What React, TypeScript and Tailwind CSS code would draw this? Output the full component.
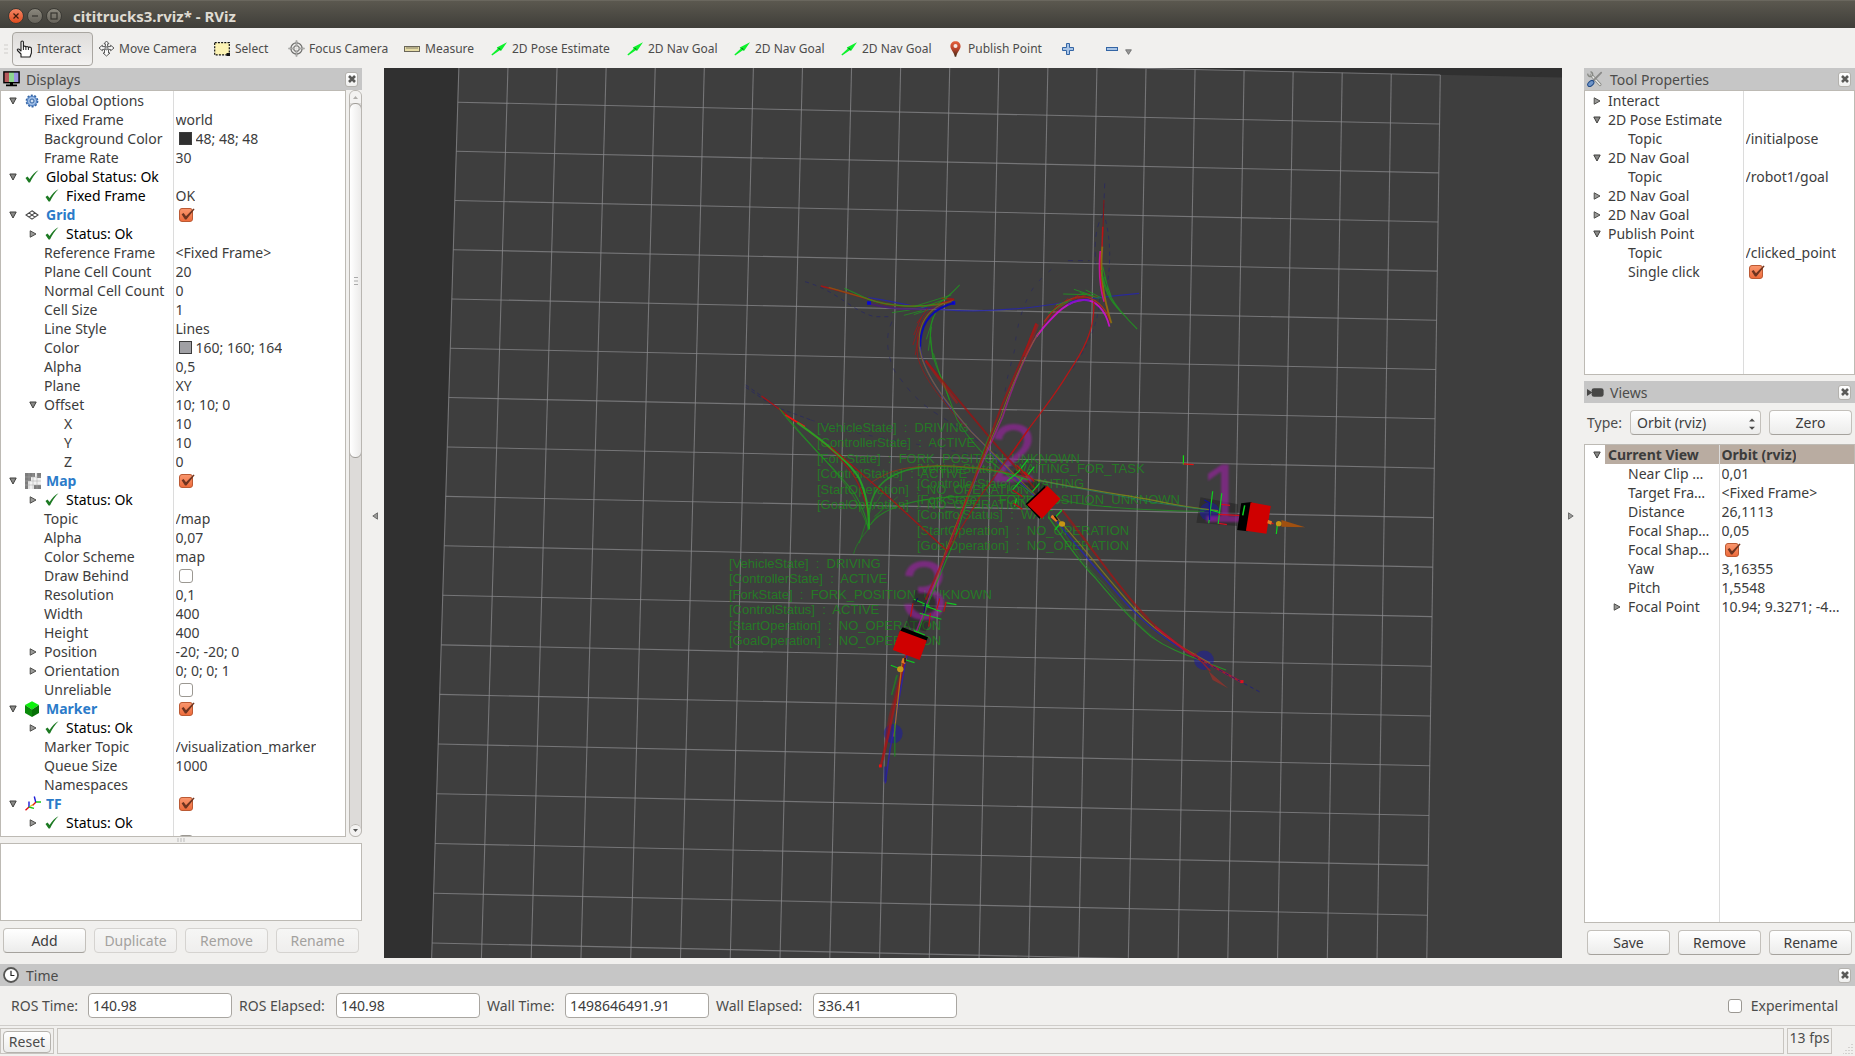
import React from "react";

/* ---------- small shared pieces ---------- */

const buttonFace =
  "h-[25px] rounded border border-[#c3c0bb] border-b-[#a5a29d] bg-linear-to-b from-white to-[#ececeb] text-center leading-[22px]";

function PushButton({ label, disabled = false }: { label: string; disabled?: boolean }) {
  return (
    <button
      type="button"
      disabled={disabled}
      className={
        disabled
          ? "h-[25px] min-w-0 flex-1 rounded border border-[#d5d3d0] bg-linear-to-b from-[#f6f6f5] to-[#efeeed] text-center leading-[22px] text-[#a3a19e]"
          : buttonFace + " min-w-0 flex-1"
      }
    >
      {label}
    </button>
  );
}

function CheckBox({ label, checked = false }: { label: string; checked?: boolean }) {
  return (
    <span className="relative block size-[14px]">
      <input
        type="checkbox"
        aria-label={label}
        defaultChecked={checked}
        className="peer block size-[14px] appearance-none rounded-[3px] border border-[#9b9892] bg-white checked:border-[#bb5a34] checked:bg-linear-to-b checked:from-[#f9956c] checked:to-[#ee6c3c]"
      />
      <svg
        viewBox="0 0 16 16"
        className="pointer-events-none absolute top-[-1px] left-0 hidden size-4 peer-checked:block"
      >
        <path d="M2.6 7.2 L4.6 6 L7 9.2 L14.6 1.6 L15.6 2.2 L7.4 12.6 L6 12.4 Z" fill="#6e3420" />
      </svg>
    </span>
  );
}

function Arrow({ open }: { open: boolean }) {
  return open ? (
    <svg viewBox="0 0 8 8" className="size-2">
      <path d="M0.8 1 H7.2 L4 7 Z" fill="#8a8a88" stroke="#3f3f3d" />
    </svg>
  ) : (
    <svg viewBox="0 0 8 8" className="size-2">
      <path d="M1.2 0.8 V7.2 L7 4 Z" fill="#9a9a98" stroke="#4d4d4b" />
    </svg>
  );
}

function CloseButton({ label }: { label: string }) {
  return (
    <button
      type="button"
      aria-label={label}
      className="flex h-[15px] w-[13px] items-center justify-center rounded-[3px] border border-[#b4b2ae] bg-linear-to-b from-white to-[#f0f0ef]"
    >
      <svg viewBox="0 0 8 8" className="size-2">
        <path d="M1 1 L7 7 M7 1 L1 7" stroke="#5a5a58" strokeWidth="2.6" />
      </svg>
    </button>
  );
}

function PanelTitle({ icon, title }: { icon: React.ReactNode; title: string }) {
  return (
    <div className="flex h-[22px] shrink-0 items-center bg-[#c6c6c6] pr-1 pl-[3px] text-[#4c4c4b]">
      <span className="flex w-[23px] shrink-0 items-center">{icon}</span>
      <h2 className="flex-1 pt-0.5 leading-5">{title}</h2>
      <CloseButton label={"Close " + title} />
    </div>
  );
}

/* ---------- icons ---------- */

const MonitorIcon = () => (
  <svg viewBox="0 0 17 16" className="h-4 w-[17px]">
    <rect x="1" y="1" width="5" height="10.5" fill="#b5595c" />
    <rect x="6" y="1" width="5" height="10.5" fill="#8fd691" />
    <rect x="11" y="1" width="5" height="10.5" fill="#9b94e0" />
    <rect x="0.9" y="0.9" width="15.2" height="10.8" fill="none" stroke="#000" strokeWidth="1.4" />
    <path d="M7 12h3v1.5h4v1.7H3v-1.7h4z" fill="#000" />
  </svg>
);

const GearIcon = () => (
  <svg viewBox="0 0 14 14" className="size-[14px]">
    <circle cx="7" cy="7" r="5.6" fill="#8fb3e0" stroke="#3465a4" strokeWidth="1.6" strokeDasharray="2 1.5" />
    <circle cx="7" cy="7" r="4.6" fill="#9dbce4" stroke="#4a7abf" strokeWidth="0.8" />
    <circle cx="7" cy="7" r="2" fill="#cfdff2" stroke="#3465a4" />
  </svg>
);

const TickIcon = () => (
  <svg viewBox="0 0 14 13" className="h-[13px] w-[14px]">
    <path d="M0.5 8 L2.5 6.6 L4.6 9 C7 5 10 2 13.4 0.3 C10 4 7 8 5 12.6 L3.6 12.6 Z" fill="#1d7a23" />
  </svg>
);

const GridIcon = () => (
  <svg viewBox="0 0 14 10" className="h-[10px] w-[14px]" fill="none" stroke="#484848" strokeWidth="1.1">
    <path d="M7 0.8 L13 5 L7 9.2 L1 5 Z M4 2.9 L10 7.1 M10 2.9 L4 7.1" />
  </svg>
);

const MapIcon = () => (
  <svg viewBox="0 0 16 16" className="size-4">
    <rect width="16" height="16" fill="#f2f2f2" />
    <path d="M0 0h10v4h-4v4h-3v8h-3z M12 0h4v5h-4z M9 12h7v4H9z" fill="#7d7d7d" />
    <path d="M4 0v16M8 0v16M12 0v16M0 4h16M0 8h16M0 12h16" stroke="#aaa" strokeWidth="0.5" />
  </svg>
);

const CubeIcon = () => (
  <svg viewBox="0 0 14 16" className="h-4 w-[14px]">
    <path d="M7 0.2 L14 4 L7 8.4 L0 4 Z" fill="#0cf20c" />
    <path d="M0 4 L7 8.4 V16 L0 12 Z" fill="#0a8a0a" />
    <path d="M14 4 L7 8.4 V16 L14 12 Z" fill="#067006" />
  </svg>
);

const AxesIcon = () => (
  <svg viewBox="0 0 16 15" className="h-[15px] w-4" fill="none" strokeWidth="1.4">
    <path d="M4 11 L0.5 14.3 M11 6 L7.5 9.5" stroke="#e01010" />
    <path d="M4 11 V5.5 M10.7 6 L9.3 0.5" stroke="#1c1cd8" />
    <path d="M4 11 L9 12.4 M11 6 H16" stroke="#18c818" />
    <path d="M5 10.5 L8 8.5" stroke="#e0c020" />
  </svg>
);

const ToolsIcon = () => (
  <svg viewBox="0 0 16 16" className="size-4">
    <path d="M4.2 4 L13 13.6" stroke="#888a85" strokeWidth="3" strokeLinecap="round" />
    <path d="M4.2 4 L13 13.6" stroke="#eeeeec" strokeWidth="1.4" strokeLinecap="round" />
    <path d="M0.9 2.6 a2.4 2.4 0 1 0 2.6 -1.8" fill="none" stroke="#888a85" strokeWidth="1.4" />
    <path d="M14.2 1.6 L6 10" stroke="#8a8a88" strokeWidth="1.8" strokeLinecap="round" />
    <ellipse cx="3.8" cy="12.5" rx="3.6" ry="2.3" transform="rotate(-42 3.8 12.5)" fill="#6f95c8" stroke="#204a87" />
  </svg>
);

const CameraIcon = () => (
  <svg viewBox="0 0 17 9" className="h-[9px] w-[17px]" fill="#474746">
    <path d="M0 1 L4 3.5 V5.5 L0 8 Z" />
    <rect x="4.6" y="0.2" width="12" height="8.6" rx="2.4" />
    <path d="M4 4.5h2" stroke="#474746" />
  </svg>
);

const ClockIcon = () => (
  <svg viewBox="0 0 16 16" className="size-4">
    <circle cx="8" cy="8" r="7" fill="#fff" stroke="#565654" strokeWidth="1.8" />
    <path d="M8 3.8 V8.5 H11.4" fill="none" stroke="#222" strokeWidth="1.2" />
  </svg>
);

const HandIcon = () => (
  <svg viewBox="0 0 18 18" className="size-[18px]">
    <path
      d="M5 17 L5 14 L1.5 10.5 C0.8 9.2 2 8.6 3 9.2 L5 11 V2 C5 0.6 7.4 0.6 7.4 2 V7 C7.4 5.8 9.9 5.8 9.9 7.2 C9.9 6.2 12.4 6.2 12.4 7.8 C12.6 6.8 15.4 6.8 15.4 8.6 V13 L14 17 Z"
      fill="#fff"
      stroke="#1e1e1e"
      strokeWidth="1.1"
      strokeLinejoin="round"
    />
    <path d="M7.4 7v3M9.9 7.4v2.6M12.4 8v2" stroke="#1e1e1e" />
  </svg>
);

const MoveIcon = () => (
  <svg viewBox="0 0 17 17" className="size-[17px]">
    <path
      d="M8.5 1 L11 3.8 H9.6 V6.6 H12.6 V5.2 L16 8 L12.6 10.8 V9.4 H10.5 V13 H12 L8.5 16 L5 13 H6.5 V9.4 H4.4 V10.8 L1 8 L4.4 5.2 V6.6 H7.4 V3.8 H6 Z"
      fill="#fafafa"
      stroke="#4a4a4a"
      strokeWidth="0.9"
    />
    <circle cx="8.5" cy="8.3" r="1.6" fill="#bbb" stroke="#555" strokeWidth="0.8" />
  </svg>
);

const SelectIcon = () => (
  <svg viewBox="0 0 16 14" className="h-[14px] w-4">
    <rect x="0.7" y="0.7" width="14.6" height="12.2" fill="#fcf3b4" stroke="#111" strokeWidth="1.2" strokeDasharray="2 1.2" />
    <path d="M12.5 11h3.5v3h-3.5z" fill="#111" />
  </svg>
);

const FocusIcon = () => (
  <svg viewBox="0 0 17 17" className="size-[17px]" fill="none" stroke="#7a7a78">
    <circle cx="8.5" cy="8.5" r="5.6" stroke="#6f6f6d" strokeWidth="1.2" />
    <circle cx="8.5" cy="8.5" r="2.8" strokeWidth="1.1" />
    <path d="M8.5 0.5v6M8.5 10.5v6M0.5 8.5h6M10.5 8.5h6" strokeWidth="1.6" />
    <path d="M8.5 1v15M1 8.5h15" stroke="#d9d9d7" strokeWidth="0.5" />
  </svg>
);

const RulerIcon = () => (
  <svg viewBox="0 0 16 6" className="h-[6px] w-4">
    <rect x="0.5" y="0.5" width="15" height="5" fill="#e6dca6" stroke="#6a6659" />
    <path d="M3 1v2M5 1v2M7 1v2M9 1v2M11 1v2M13 1v2" stroke="#6a6659" strokeWidth="0.8" />
  </svg>
);

const GoalIcon = () => (
  <svg viewBox="0 0 16 14" className="h-[14px] w-4">
    <path d="M0.4 12.4 L6.6 6.8 L5.8 5.6 L16 0.3 L10.2 8.8 L8.8 8.2 L1.2 13.4 Z" fill="#0df22c" />
    <path d="M6.6 5.8 L9.8 8.8 L9 6.2 Z" fill="#0b7a1c" />
  </svg>
);

const PinIcon = () => (
  <svg viewBox="0 0 11 16" className="h-4 w-[11px]">
    <defs>
      <linearGradient id="pin" x1="0" y1="0" x2="0" y2="1">
        <stop offset="0" stopColor="#e4603c" />
        <stop offset="0.5" stopColor="#b8432b" />
        <stop offset="1" stopColor="#3f2a14" />
      </linearGradient>
    </defs>
    <path d="M5.5 0.3 C8.6 0.3 10.6 2.4 10.6 5.3 C10.6 8.6 7 11 6.2 15.8 H4.8 C4 11 0.4 8.6 0.4 5.3 C0.4 2.4 2.4 0.3 5.5 0.3 Z" fill="url(#pin)" />
    <circle cx="5.5" cy="5" r="2" fill="#f4e9e4" />
  </svg>
);

/* ---------- window title and tool bar ---------- */

const roundButton =
  "flex size-4 items-center justify-center rounded-full border border-[#3b3a35] bg-linear-to-b from-[#8b887d] to-[#66635b]";

function TitleBar() {
  return (
    <header className="flex h-7 shrink-0 items-center border-t border-[#6a675e] bg-linear-to-b from-[#5b584f] to-[#3f3e39] pt-0.5 pl-2">
      <div className="flex w-[65px] gap-[3px]">
        <button type="button" aria-label="Close" className="flex size-4 items-center justify-center rounded-full border border-[#3b3a35] bg-linear-to-b from-[#f58462] to-[#df4b1b]">
          <svg viewBox="0 0 8 8" className="size-2">
            <path d="M1.5 1.5 L6.5 6.5 M6.5 1.5 L1.5 6.5" stroke="#3c1a0c" strokeWidth="1.2" />
          </svg>
        </button>
        <button type="button" aria-label="Minimize" className={roundButton}>
          <svg viewBox="0 0 8 8" className="size-2">
            <path d="M1 4h6" stroke="#36342f" strokeWidth="1.2" />
          </svg>
        </button>
        <button type="button" aria-label="Maximize" className={roundButton}>
          <svg viewBox="0 0 8 8" className="size-2">
            <rect x="1" y="1" width="6" height="6" fill="none" stroke="#36342f" strokeWidth="1.2" />
          </svg>
        </button>
      </div>
      <h1 className="text-[15px] leading-5 font-bold text-[#dfdbd2]">cititrucks3.rviz* - RViz</h1>
    </header>
  );
}

function Tool({ icon, label, width }: { icon: React.ReactNode; label: string; width: string }) {
  return (
    <button type="button" className={"flex h-[34px] shrink-0 items-center pl-[5px] " + width}>
      <span className="flex w-[21px] shrink-0 items-center">{icon}</span>
      <span className="whitespace-nowrap">{label}</span>
    </button>
  );
}

function ToolBar() {
  return (
    <nav aria-label="Tools" className="flex h-10 shrink-0 items-center pt-px pl-1 text-xs text-[#4c4c4b]">
      <svg viewBox="0 0 4 10" className="mr-1 h-[10px] w-1 shrink-0">
        <path d="M0 1h4M0 5h4M0 9h4" stroke="#cfcdca" />
      </svg>
      <button type="button" aria-pressed="true" className="flex h-[34px] w-[81px] shrink-0 items-center rounded border border-[#a9a6a1] bg-linear-to-b from-[#dedcda] to-[#f3f2f1] pl-[3px]">
        <span className="flex w-[21px] shrink-0 items-center">
          <HandIcon />
        </span>
        Interact
      </button>
      <Tool icon={<MoveIcon />} label="Move Camera" width="w-[116px]" />
      <Tool icon={<SelectIcon />} label="Select" width="w-[74px]" />
      <Tool icon={<FocusIcon />} label="Focus Camera" width="w-[116px]" />
      <Tool icon={<RulerIcon />} label="Measure" width="w-[87px]" />
      <Tool icon={<GoalIcon />} label="2D Pose Estimate" width="w-[136px]" />
      <Tool icon={<GoalIcon />} label="2D Nav Goal" width="w-[107px]" />
      <Tool icon={<GoalIcon />} label="2D Nav Goal" width="w-[107px]" />
      <Tool icon={<GoalIcon />} label="2D Nav Goal" width="w-[109px]" />
      <button type="button" className="flex h-[34px] w-[108px] shrink-0 items-center pl-[5px]">
        <span className="flex w-[18px] items-center">
          <PinIcon />
        </span>
        <span className="whitespace-nowrap">Publish Point</span>
      </button>
      <button type="button" aria-label="Add tool" className="flex h-[34px] w-11 shrink-0 items-center pl-[9px]">
        <svg viewBox="0 0 12 12" className="size-3">
          <path d="M4.5 0.5h3v4h4v3h-4v4h-3v-4h-4v-3h4z" fill="#a8c4e6" stroke="#3465a4" />
        </svg>
      </button>
      <button type="button" aria-label="Remove tool" className="flex h-[34px] w-10 shrink-0 items-center gap-[7px] pl-[9px]">
        <svg viewBox="0 0 12 4" className="h-1 w-3">
          <rect x="0.5" y="0.5" width="11" height="3" fill="#a8c4e6" stroke="#3465a4" />
        </svg>
        <svg viewBox="0 0 7 6" className="mt-1.5 h-1.5 w-[7px]">
          <path d="M0.6 0.8h5.8L3.5 5.4z" fill="#999" stroke="#666" strokeWidth="0.8" />
        </svg>
      </button>
    </nav>
  );
}

/* ---------- property trees ---------- */

type Row = {
  name: string;
  depth: number;
  value?: string;
  open?: boolean;
  icon?: React.ReactNode;
  check?: boolean;
  swatch?: string;
  tone?: "ok" | "display" | "selected";
};

const plainPad = ["pl-[23px]", "pl-[43px]", "pl-[63px]"];
const arrowSpace = ["w-[24px] pl-[8px]", "w-[44px] pl-[28px]", "w-[64px] pl-[48px]"];

const toneClass = { ok: "text-black", display: "font-bold text-[#2b7bc9]", selected: "font-bold" };

function NameCell({ row }: { row: Row }) {
  const tone = row.tone ? toneClass[row.tone] : "";
  const hasArrow = row.open !== undefined;
  if (!row.icon && !hasArrow) {
    return <div className={"truncate " + plainPad[row.depth] + " " + tone}>{row.name}</div>;
  }
  let nameOffset = "-ml-px";
  if (row.icon) nameOffset = "";
  if (row.tone === "selected") nameOffset = "-ml-1 bg-[#b9aca1] pl-[3px]";
  return (
    <div className={"flex h-[19px] items-center " + tone}>
      <span className={"flex shrink-0 items-center " + arrowSpace[row.depth]}>
        {hasArrow && <Arrow open={row.open === true} />}
      </span>
      {row.icon && <span className="flex w-[21px] shrink-0 items-center">{row.icon}</span>}
      <span className={"min-w-0 flex-1 truncate " + nameOffset}>{row.name}</span>
    </div>
  );
}

function Tree({ rows, label, nameWidth }: { rows: Row[]; label: string; nameWidth: string }) {
  return (
    <table aria-label={label} className="h-full w-full table-fixed border-collapse leading-[19px]">
      <colgroup>
        <col className={nameWidth} />
        <col />
      </colgroup>
      <tbody>
        {rows.map((row, i) => (
          <tr key={i} className="h-[19px]">
            <th scope="row" className="overflow-hidden border-r border-[#dcdcdc] p-0 text-left font-normal">
              <NameCell row={row} />
            </th>
            <td className={"overflow-hidden p-0 pl-0.5 " + (row.tone === "selected" ? "bg-[#b9aca1] font-bold" : "")}>
              <div className="flex h-[19px] items-center">
                {row.check !== undefined && (
                  <span className="pl-[3px]">
                    <CheckBox label={row.name} checked={row.check} />
                  </span>
                )}
                {row.swatch && <span className={"mr-1 ml-[3px] size-[13px] border border-[#3c3c3c] " + row.swatch} />}
                {row.value && <span className="truncate">{row.value}</span>}
              </div>
            </td>
          </tr>
        ))}
        <tr aria-hidden="true">
          <td className="border-r border-[#dcdcdc] p-0" />
          <td className="p-0" />
        </tr>
      </tbody>
    </table>
  );
}

const status: Row = { name: "Status: Ok", depth: 1, open: false, icon: <TickIcon />, tone: "ok" };

const displayRows: Row[] = [
  { name: "Global Options", depth: 0, open: true, icon: <GearIcon /> },
  { name: "Fixed Frame", depth: 1, value: "world" },
  { name: "Background Color", depth: 1, value: "48; 48; 48", swatch: "bg-[#303030]" },
  { name: "Frame Rate", depth: 1, value: "30" },
  { name: "Global Status: Ok", depth: 0, open: true, icon: <TickIcon />, tone: "ok" },
  { name: "Fixed Frame", depth: 1, icon: <TickIcon />, tone: "ok", value: "OK" },
  { name: "Grid", depth: 0, open: true, icon: <GridIcon />, tone: "display", check: true },
  status,
  { name: "Reference Frame", depth: 1, value: "<Fixed Frame>" },
  { name: "Plane Cell Count", depth: 1, value: "20" },
  { name: "Normal Cell Count", depth: 1, value: "0" },
  { name: "Cell Size", depth: 1, value: "1" },
  { name: "Line Style", depth: 1, value: "Lines" },
  { name: "Color", depth: 1, value: "160; 160; 164", swatch: "bg-[#a0a0a4]" },
  { name: "Alpha", depth: 1, value: "0,5" },
  { name: "Plane", depth: 1, value: "XY" },
  { name: "Offset", depth: 1, open: true, value: "10; 10; 0" },
  { name: "X", depth: 2, value: "10" },
  { name: "Y", depth: 2, value: "10" },
  { name: "Z", depth: 2, value: "0" },
  { name: "Map", depth: 0, open: true, icon: <MapIcon />, tone: "display", check: true },
  status,
  { name: "Topic", depth: 1, value: "/map" },
  { name: "Alpha", depth: 1, value: "0,07" },
  { name: "Color Scheme", depth: 1, value: "map" },
  { name: "Draw Behind", depth: 1, check: false },
  { name: "Resolution", depth: 1, value: "0,1" },
  { name: "Width", depth: 1, value: "400" },
  { name: "Height", depth: 1, value: "400" },
  { name: "Position", depth: 1, open: false, value: "-20; -20; 0" },
  { name: "Orientation", depth: 1, open: false, value: "0; 0; 0; 1" },
  { name: "Unreliable", depth: 1, check: false },
  { name: "Marker", depth: 0, open: true, icon: <CubeIcon />, tone: "display", check: true },
  status,
  { name: "Marker Topic", depth: 1, value: "/visualization_marker" },
  { name: "Queue Size", depth: 1, value: "1000" },
  { name: "Namespaces", depth: 1 },
  { name: "TF", depth: 0, open: true, icon: <AxesIcon />, tone: "display", check: true },
  status,
  { name: "Show Names", depth: 1, check: false },
];

const toolRows: Row[] = [
  { name: "Interact", depth: 0, open: false },
  { name: "2D Pose Estimate", depth: 0, open: true },
  { name: "Topic", depth: 1, value: "/initialpose" },
  { name: "2D Nav Goal", depth: 0, open: true },
  { name: "Topic", depth: 1, value: "/robot1/goal" },
  { name: "2D Nav Goal", depth: 0, open: false },
  { name: "2D Nav Goal", depth: 0, open: false },
  { name: "Publish Point", depth: 0, open: true },
  { name: "Topic", depth: 1, value: "/clicked_point" },
  { name: "Single click", depth: 1, check: true },
];

const viewRows: Row[] = [
  { name: "Current View", depth: 0, open: true, value: "Orbit (rviz)", tone: "selected" },
  { name: "Near Clip …", depth: 1, value: "0,01" },
  { name: "Target Fra…", depth: 1, value: "<Fixed Frame>" },
  { name: "Distance", depth: 1, value: "26,1113" },
  { name: "Focal Shap…", depth: 1, value: "0,05" },
  { name: "Focal Shap…", depth: 1, check: true },
  { name: "Yaw", depth: 1, value: "3,16355" },
  { name: "Pitch", depth: 1, value: "1,5548" },
  { name: "Focal Point", depth: 1, open: false, value: "10.94; 9.3271; -4…" },
];

/* ---------- side panels ---------- */

function ScrollBar() {
  return (
    <div aria-hidden="true" className="flex w-[13px] shrink-0 flex-col overflow-hidden rounded-md border border-[#b9b6b1] bg-[#dddbd9]">
      <div className="flex h-3 shrink-0 items-center justify-center bg-[#f3f2f1]">
        <svg viewBox="0 0 5 3" className="h-[3px] w-[5px]">
          <path d="M0 3 L2.5 0 L5 3z" fill="#b0aeab" />
        </svg>
      </div>
      <div className="-mx-px flex h-[355px] shrink-0 items-center justify-center rounded-md border border-[#a09d98] bg-linear-to-r from-white to-[#ebeae9]">
        <svg viewBox="0 0 4 8" className="h-2 w-1">
          <path d="M0 .5h4M0 4h4M0 7.5h4" stroke="#aaa" />
        </svg>
      </div>
      <div className="flex-1" />
      <div className="flex h-3 shrink-0 items-center justify-center rounded-md border-t border-[#b9b6b1] bg-[#f3f2f1]">
        <svg viewBox="0 0 5 3" className="h-[3px] w-[5px]">
          <path d="M0 0 L2.5 3 L5 0z" fill="#555" />
        </svg>
      </div>
    </div>
  );
}

function DisplaysPanel() {
  return (
    <aside className="flex w-[362px] shrink-0 flex-col">
      <PanelTitle icon={<MonitorIcon />} title="Displays" />
      <div className="flex min-h-0 flex-1 gap-[3px]">
        <div className="min-w-0 flex-1 overflow-hidden border border-[#bdbab4] bg-white">
          <Tree rows={displayRows} label="Displays" nameWidth="w-[172px]" />
        </div>
        <ScrollBar />
      </div>
      <div className="flex h-1.5 shrink-0 items-center justify-center">
        <svg viewBox="0 0 8 4" className="h-1 w-2">
          <path d="M1 0v4M4 0v4M7 0v4" stroke="#bbb" />
        </svg>
      </div>
      <div className="h-[78px] shrink-0 border border-[#bdbab4] bg-white" />
      <div className="flex h-[43px] shrink-0 gap-2 px-[3px] pt-[7px]">
        <PushButton label="Add" />
        <PushButton label="Duplicate" disabled />
        <PushButton label="Remove" disabled />
        <PushButton label="Rename" disabled />
      </div>
    </aside>
  );
}

function RightPanels() {
  return (
    <aside className="flex w-[271px] shrink-0 flex-col">
      <section className="flex h-[307px] shrink-0 flex-col">
        <PanelTitle icon={<ToolsIcon />} title="Tool Properties" />
        <div className="min-h-0 flex-1 overflow-hidden border border-[#bdbab4] bg-white">
          <Tree rows={toolRows} label="Tool Properties" nameWidth="w-[158px]" />
        </div>
      </section>
      <section className="flex min-h-0 flex-1 flex-col pt-1.5">
        <PanelTitle icon={<CameraIcon />} title="Views" />
        <div className="flex h-[41px] shrink-0 items-center gap-2 pr-[3px] pb-0.5 pl-[3px]">
          <label htmlFor="view-type" className="w-[35px] text-[#4c4c4b]">
            Type:
          </label>
          <div className="relative flex-1">
            <select id="view-type" defaultValue="orbit" className={buttonFace + " w-full appearance-none pl-1.5 text-left"}>
              <option value="orbit">Orbit (rviz)</option>
            </select>
            <svg viewBox="0 0 6 12" className="pointer-events-none absolute top-2 right-1.5 h-3 w-1.5" fill="#4c4c4b">
              <path d="M0 3.5 L3 0.5 L6 3.5z M0 8.8 L3 11.8 L6 8.8z" />
            </svg>
          </div>
          <button type="button" className={buttonFace + " w-[83px]"}>
            Zero
          </button>
        </div>
        <div className="min-h-0 flex-1 overflow-hidden border border-[#bdbab4] bg-white">
          <Tree rows={viewRows} label="Views" nameWidth="w-[134px]" />
        </div>
        <div className="flex h-[41px] shrink-0 gap-2 px-[3px] pt-[7px]">
          <PushButton label="Save" />
          <PushButton label="Remove" />
          <PushButton label="Rename" />
        </div>
      </section>
    </aside>
  );
}

/* ---------- 3D view ---------- */

const CELLS = 20;
const leftY = (i: number) => (i === 0 ? -15 : 34.2 + 49.1 * (i - 1) + 0.021 * (i - 1) * (i - 1));
const rightY = (i: number) => 7 + 48.9 * i + 0.031 * i * i;
const leftX = (y: number) => 73.8 - 0.03056 * (y - 34.2);
const rightX = (y: number) => 1056.3 - 0.01528 * (y - 7);

const mix = (a: number, b: number, t: number) => a + (b - a) * t;
const steps = Array.from({ length: CELLS + 1 }, (_, i) => i);

function GroundGrid() {
  return (
    <g stroke="#8b8b8d" strokeOpacity="0.72" strokeWidth="1.1">
      {steps.map((i) => (
        <line key={"h" + i} x1={leftX(leftY(i))} y1={leftY(i)} x2={rightX(rightY(i))} y2={rightY(i)} />
      ))}
      {steps.map((j) => {
        const t = j / CELLS;
        return (
          <line
            key={"v" + j}
            x1={mix(leftX(leftY(0)), rightX(rightY(0)), t)}
            y1={mix(leftY(0), rightY(0), t)}
            x2={mix(leftX(leftY(CELLS)), rightX(rightY(CELLS)), t)}
            y2={mix(leftY(CELLS), rightY(CELLS), t)}
          />
        );
      })}
    </g>
  );
}

/* Each trail: path data, colour, width, opacity and an optional dash pattern. */
const trails: [string, string, number, number, string?][] = [
  // planned routes, dashed navy
  ["M375 383 C450 395 480 412 560 419 S720 425 830 405 S960 380 1060 370", "#2424b0", 1.2, 0.8],
  ["M215 335 C300 365 330 420 390 440 L435 440", "#22226c", 1, 0.6, "4 4"],
  ["M435 455 C415 500 425 560 440 600 C470 650 500 700 560 740 L700 850", "#22226c", 1, 0.5, "5 7"],
  ["M973 40 L970 130 C945 180 948 230 950 280", "#22226c", 1, 0.6, "5 5"],
  ["M975 150 C990 220 988 300 975 370", "#22226c", 1, 0.6, "4 4"],
  ["M838 298 L800 340 C770 390 750 460 745 540 C735 590 720 640 720 690", "#22226c", 1, 0.5, "4 9"],
  ["M880 272 H935", "#22226c", 1, 0.6, "5 5"],
  ["M960 385 C960 450 930 530 890 600", "#22226c", 1, 0.5, "4 4"],
  ["M65 645 L150 715 L230 750 M65 652 L140 712", "#22226c", 1, 0.6, "4 3"],
  ["M230 750 C350 800 500 820 620 850 L760 900", "#22226c", 1, 0.4, "4 8"],
  // upper-left fork
  ["M255 348 C330 370 370 385 400 397 C450 414 540 412 592 388 L560 385", "#b01010", 1.4, 0.85],
  ["M275 352 L370 385 C430 412 530 418 590 392", "#8a5a10", 1.4, 0.8],
  ["M315 355 L375 388 C430 412 500 412 550 402 C580 380 592 362 606 345", "#1e9a1e", 1.1, 0.8],
  ["M490 410 L585 375 M500 418 L575 385 M435 428 L480 420 M465 436 L510 422 M490 434 L530 418", "#1e9a1e", 1, 0.7],
  ["M375 400 C420 415 480 424 560 412", "#4a1a7a", 1.8, 0.8],
  ["M372 399 h10 M586 399 h9", "#0808d8", 3.5, 1],
  ["M591 399 C540 415 512 450 507 510 L506 540", "#0808b8", 2, 0.95],
  ["M506 530 C510 600 570 700 630 778 C690 850 740 920 815 1000", "#4030a0", 1.4, 0.9],
  ["M565 400 C520 425 500 470 504 530 C512 610 575 700 635 785 C700 860 740 910 820 1000", "#8a7018", 1.2, 0.7],
  ["M540 412 C510 440 494 480 500 560 C512 620 560 690 620 770", "#a01515", 1, 0.7],
  ["M525 415 L498 460 M510 440 L490 495 M503 470 L488 525 M502 500 L494 555", "#a01515", 1, 0.8],
  ["M545 430 C520 480 535 560 555 610 C575 670 590 720 600 750 C640 830 700 900 790 970", "#1e9a1e", 1.1, 0.75],
  ["M540 440 L522 508 M535 470 L527 542 M533 500 L538 568 M540 550 L560 630 M560 620 L580 690", "#1e9a1e", 1, 0.7],
  ["M520 572 L665 778 C700 830 740 880 800 960", "#a01010", 1.8, 0.75],
  ["M520 572 L600 700", "#c01010", 2.5, 0.5],
  // upper-right loop
  ["M962 243 C958 300 960 350 972 395", "#d010a0", 2, 0.9],
  ["M985 470 C975 420 950 388 918 390 C880 392 850 430 820 470 L800 500", "#d010d0", 1.8, 0.9],
  ["M880 405 C900 388 915 388 935 392", "#5a10d0", 2, 0.6],
  ["M805 490 C775 545 740 650 715 740 L655 900 L575 1140 L495 1390", "#a02090", 1.6, 0.75],
  ["M810 480 C775 545 735 650 710 740 L650 905 L570 1145 L540 1260", "#907018", 1, 0.8],
  ["M690 775 C660 850 650 900 640 940 L590 1120 L530 1290 L500 1390", "#1e9a1e", 1.1, 0.8],
  ["M800 460 L780 520 L715 700 L655 890 L577 1135 L520 1290", "#a81212", 2, 0.7],
  ["M802 462 L770 560", "#c01010", 4, 0.45],
  ["M820 455 C850 405 880 382 915 380 C945 382 970 400 988 455", "#c03010", 1.4, 0.8],
  ["M815 470 L855 400 M838 440 L880 385 M860 412 L910 372 M885 392 L935 370 M905 385 L955 378", "#b01515", 1, 0.8],
  ["M830 430 L880 395 M868 372 L925 374 M895 358 L945 378 M910 368 L960 385 M925 360 L965 384 M850 405 L890 390", "#1e9a1e", 1, 0.8],
  ["M971 90 L968 200", "#901010", 1, 0.9],
  ["M968 170 L966 240 C958 310 965 360 978 410 L988 458", "#d01010", 1.5, 0.8],
  ["M967 230 C961 310 968 375 990 460", "#8a7a10", 1.8, 0.8],
  ["M965 300 C972 350 985 395 1055 477 M966 320 C975 370 990 400 1030 445 M972 320 L990 382 M968 290 L982 360", "#1e9a1e", 1.1, 0.8],
  ["M945 395 C950 480 915 550 880 610 C850 670 810 730 780 778 L735 855", "#c81010", 1.3, 0.85],
  ["M780 778 L655 985 L577 1140", "#b01010", 1.3, 0.7],
  // left cusp
  ["M105 678 C130 700 160 725 190 755", "#b01010", 1.4, 0.9],
  ["M190 753 C250 805 300 850 340 920 C362 965 376 1010 377 1070", "#b01010", 1.2, 0.8],
  ["M165 735 L215 770", "#ff1010", 1.6, 0.9],
  ["M195 758 C260 812 330 880 352 925 C370 970 377 1030 377 1078", "#22b022", 2, 0.85],
  ["M377 1078 C372 1000 390 950 430 922 C480 885 560 885 620 892 C690 898 730 910 780 930", "#22a022", 1.8, 0.75],
  ["M150 715 C200 800 290 890 340 970 C360 1010 372 1050 375 1080", "#1e9a1e", 1.1, 0.8],
  ["M170 740 C230 830 320 930 352 1010 L374 1070", "#1e9a1e", 1, 0.6],
  ["M377 1075 C360 1100 345 1120 338 1152 M374 1040 L352 1120", "#1e8a1e", 1, 0.7],
  ["M380 1065 C410 1010 500 985 600 980 C720 975 800 975 860 990 C960 1015 1080 1022 1225 1024", "#1e9a1e", 1.1, 0.7],
  ["M382 1060 L415 1010 M390 1040 L450 980 M385 1020 L420 950", "#1e8a1e", 1, 0.6],
  ["M380 940 C430 900 460 890 560 887 C640 890 720 900 800 930", "#b03010", 1, 0.6],
  ["M800 930 C900 955 1000 970 1100 992 C1160 1008 1210 1016 1260 1022", "#8a8a18", 1.3, 0.8],
  ["M810 932 C910 958 1010 976 1100 998 L1230 1020", "#1e8a60", 1, 0.7],
  ["M280 830 L430 985 L575 1143", "#b01010", 1.3, 0.85],
  // lower-right branch
  ["M830 1040 C870 1110 920 1190 950 1225 C1000 1295 1040 1350 1090 1400 C1140 1442 1180 1455 1280 1500", "#22a022", 1.2, 0.8],
  ["M840 1040 C890 1120 920 1190 970 1240 C1010 1300 1060 1370 1100 1405", "#1e8a1e", 1, 0.5],
  ["M845 1045 C920 1150 1000 1270 1050 1328 C1110 1400 1170 1440 1225 1472", "#2424b0", 1.3, 0.85],
  ["M850 1040 C925 1140 1005 1262 1055 1325 C1115 1398 1175 1438 1240 1480", "#908018", 1.2, 0.8],
  ["M865 1020 C930 1115 1005 1250 1080 1345 C1140 1415 1180 1440 1220 1475", "#a01515", 2, 0.7],
  ["M880 1050 C950 1150 1020 1270 1085 1345", "#a01515", 1, 0.5],
  ["M1100 1370 L1180 1445 L1320 1537", "#c01030", 2, 0.75],
  ["M1200 1450 L1240 1504", "#a02020", 1.6, 0.8],
  ["M1200 1460 L1365 1566", "#202078", 1, 0.9, "4 3"],
  ["M1316 1535 h8", "#e01020", 3, 1],
  // lower-left branch
  ["M495 1390 L465 1475 C455 1540 440 1610 425 1700 L406 1790", "#b01515", 2.4, 0.75],
  ["M468 1470 L430 1640 L412 1770", "#a01515", 3, 0.45],
  ["M490 1390 L470 1470 L445 1640 L430 1740 L418 1840", "#3020a8", 1.5, 0.85],
  ["M460 1480 L440 1700", "#c08018", 1.2, 0.8],
  ["M448 1515 L434 1575 M446 1520 L438 1560 M442 1660 V1760", "#1e8a1e", 1.5, 0.7],
  ["M418 1790 L418 1835", "#202090", 3, 0.6],
  ["M402 1788 h7", "#f01010", 3, 1],
];

/* Coordinate-frame axes drawn on and around the vehicles. */
const axes: [string, string][] = [
  ["M1172 856 V884", "#10e010"],
  ["M1172 882 L1198 884", "#e01010"],
  ["M1246 964 L1236 1060 M1269 970 L1260 1062 M1240 1020 L1265 1028 M1325 1005 L1322 1038 M1410 1060 L1407 1092", "#10d020"],
  ["M1268 1003 L1290 1006 M1262 1060 L1282 1064 M1260 1033 L1322 1037 M1385 1052 L1400 1062", "#d01020"],
  ["M1238 1000 V1050 M1225 990 L1240 1000", "#1010a0"],
  ["M778 870 L755 905 M795 890 L775 920 M755 905 L725 935 M808 940 L790 965 M765 925 L740 960 M750 985 L745 1010 M865 1020 L845 1045 M860 1060 L848 1080", "#10c820"],
  ["M750 885 L778 920 M740 960 L765 980 M770 905 L795 935 M742 1000 L765 1018", "#c01010"],
  ["M490 1288 L530 1308 M512 1305 L560 1325 M505 1330 L560 1348 M570 1298 L598 1304 M490 1382 L518 1395 M432 1486 L458 1498 M470 1470 L492 1478", "#10c820"],
  ["M488 1300 L482 1340 M572 1295 L566 1325 M532 1330 L528 1370 M556 1285 L548 1320", "#c01010"],
  ["M500 1285 L495 1295 M520 1300 L515 1330", "#101060"],
];

const labelBlocks = [
  { x: 433, y: 364, lines: [["VehicleState", "DRIVING"], ["ControllerState", "ACTIVE"], ["ForkState", "FORK_POSITION_UNKNOWN"], ["ControlStatus", "ACTIVE"], ["StartOperation", "NO_OPERATION"], ["GoalOperation", "NO_OPERATION"]] },
  { x: 533, y: 405, lines: [["VehicleState", "WAITING_FOR_TASK"], ["ControllerState", "WAITING"], ["ForkState", "FORK_POSITION_UNKNOWN"], ["ControlStatus", "WAIT"], ["StartOperation", "NO_OPERATION"], ["GoalOperation", "NO_OPERATION"]] },
  { x: 345, y: 500, lines: [["VehicleState", "DRIVING"], ["ControllerState", "ACTIVE"], ["ForkState", "FORK_POSITION_UNKNOWN"], ["ControlStatus", "ACTIVE"], ["StartOperation", "NO_OPERATION"], ["GoalOperation", "NO_OPERATION"]] },
];

function Viewport() {
  return (
    <main className="h-[890px] max-h-full min-w-0 flex-1 bg-[#303030]">
      <svg viewBox="0 0 1178 890" preserveAspectRatio="xMidYMid slice" className="block h-full w-full" role="img" aria-label="Top view of three trucks on the map">
        <path d="M75 -15 L1178 9.5 V890 H47.6 Z" fill="#3e3e3e" />
        <GroundGrid />
        <g className="font-['Liberation_Sans',sans-serif] text-[13px]" fill="#1f8a1f" fillOpacity="0.8">
          {labelBlocks.map((block) =>
            block.lines.map(([key, value], i) => (
              <text key={block.x + key} x={block.x} y={block.y + i * 15.4} className="whitespace-pre">
                {`[${key}]  :  ${value}`}
              </text>
            )),
          )}
        </g>
        <g transform="translate(336 102) scale(0.3954 0.3333)" fill="none">
          <path d="M1215 982 L1310 1003 L1308 1068 L1205 1058 Z M1240 1010 L1305 1020 V1050 L1240 1042 Z" fill="#1c1c1c" fillOpacity="0.45" />
          <path d="M495 1260 L560 1280 L520 1385 L470 1370 Z M745 900 L830 950 L800 980 L735 930 Z" fill="#1c1c1c" fillOpacity="0.4" />
          <g fill="#1c1ca0" fillOpacity="0.55">
            <ellipse cx="1224" cy="1471" rx="25" ry="29" />
            <ellipse cx="438" cy="1691" rx="24" ry="29" />
            <ellipse cx="1238" cy="1025" rx="25" ry="28" />
          </g>
        </g>
        <g className="font-['Liberation_Sans',sans-serif] text-[84px] blur-[1px]" fill="#a020a8" fillOpacity="0.6">
          <text x="606" y="414">2</text>
          <text x="517" y="551">3</text>
          <text x="816" y="454">1</text>
        </g>
        <g transform="translate(336 102) scale(0.3954 0.3333)" fill="none">
          {trails.map(([d, color, width, opacity, dash], i) => (
            <path key={i} d={d} stroke={color} strokeWidth={width} strokeOpacity={opacity} strokeDasharray={dash} vectorEffect="non-scaling-stroke" />
          ))}
          {axes.map(([d, color], i) => (
            <path key={i} d={d} stroke={color} strokeWidth="1.2" vectorEffect="non-scaling-stroke" />
          ))}
          <path d="M1236 1504 L1285 1555 L1246 1530 Z" fill="#a03028" fillOpacity="0.7" />
          <path d="M1420 1050 L1480 1072 L1420 1070 Z" fill="#a05010" />
          <path d="M822 947 L773 1002 L808 1047 L830 1000 Z" fill="#000" />
          <path d="M828 947 L861 986 L814 1046 L777 1004 Z" fill="#cf0000" />
          <path d="M1318 1000 L1345 996 L1334 1084 L1308 1080 Z" fill="#000" />
          <path d="M1342 997 L1393 1008 L1382 1091 L1330 1082 Z" fill="#cf0000" />
          <path d="M1327 1006 L1322 1036" stroke="#10d020" strokeWidth="1.5" vectorEffect="non-scaling-stroke" />
          <path d="M462 1372 L526 1402 L520 1420 L454 1386 Z" fill="#000" />
          <path d="M455 1382 L523 1412 L505 1470 L437 1440 Z" fill="#cf0000" />
          <path d="M840 1034 L856 1048 L850 1056 L836 1042 Z M462 1464 L472 1466 L468 1482 L458 1478 Z M1386 1050 L1396 1054 L1394 1064 L1384 1060 Z" fill="#e87820" />
          <path d="M846 1038 L854 1050 M468 1464 V1478" stroke="#101010" strokeWidth="1.5" vectorEffect="non-scaling-stroke" />
          <g fill="#c89614">
            <ellipse cx="1413" cy="1061" rx="7" ry="8" />
            <ellipse cx="865" cy="1062" rx="8" ry="8" />
            <ellipse cx="456" cy="1498" rx="8" ry="9" />
          </g>
        </g>
      </svg>
    </main>
  );
}

function CollapseHandle({ side }: { side: "left" | "right" }) {
  return (
    <button
      type="button"
      aria-label={"Collapse " + side + " panel"}
      className={"flex w-[22px] shrink-0 items-center " + (side === "left" ? "justify-end pr-1.5" : "justify-start pl-1.5")}
    >
      <svg viewBox="0 0 6 8" className="h-2 w-1.5">
        <path d={side === "left" ? "M5.5 0.8 V7.2 L0.8 4 Z" : "M0.5 0.8 V7.2 L5.2 4 Z"} fill="#9a9a98" stroke="#5c5c5a" strokeWidth="0.8" />
      </svg>
    </button>
  );
}

/* ---------- bottom ---------- */

function TimeField({ id, label, value, labelWidth }: { id: string; label: string; value: string; labelWidth: string }) {
  return (
    <div className="flex items-center">
      <label htmlFor={id} className={"whitespace-nowrap text-[#4c4c4b] " + labelWidth}>
        {label}
      </label>
      <input id={id} readOnly defaultValue={value} className="h-[25px] w-36 rounded border border-[#a9a6a1] bg-white pl-1 leading-[22px]" />
    </div>
  );
}

function TimePanel() {
  return (
    <section className="shrink-0">
      <PanelTitle icon={<ClockIcon />} title="Time" />
      <div className="flex h-[39px] items-center gap-[7px] pr-[17px] pl-[11px]">
        <TimeField id="ros-time" label="ROS Time:" value="140.98" labelWidth="w-[77px]" />
        <TimeField id="ros-elapsed" label="ROS Elapsed:" value="140.98" labelWidth="w-[97px]" />
        <TimeField id="wall-time" label="Wall Time:" value="1498646491.91" labelWidth="w-[78px]" />
        <TimeField id="wall-elapsed" label="Wall Elapsed:" value="336.41" labelWidth="w-[97px]" />
        <div className="flex-1" />
        <label className="flex items-center gap-[9px] text-[#4c4c4b]">
          <CheckBox label="Experimental" />
          Experimental
        </label>
      </div>
    </section>
  );
}

function StatusBar() {
  return (
    <footer className="flex h-[31px] shrink-0 gap-[3px] border-t border-[#cfcdca] pt-0.5 pb-0.5 text-[#4c4c4b]">
      <div className="flex w-[54px] border border-[#c8c5c0] p-[2px]">
        <button type="button" className="h-[22px] flex-1 rounded border border-[#b5b2ad] bg-linear-to-b from-white to-[#ececeb] text-center leading-5">
          Reset
        </button>
      </div>
      <div className="flex-1 border border-[#c8c5c0]" />
      <output className="w-[45px] border border-[#c8c5c0] text-center leading-[18px] whitespace-nowrap">13 fps</output>
      <div className="flex w-5 items-end justify-end pr-0.5">
        <svg viewBox="0 0 10 10" className="size-[10px]">
          <path d="M9 0v10M6 3v7M3 6v4M0 9v1" stroke="#b5b3b0" strokeDasharray="1 2" />
        </svg>
      </div>
    </footer>
  );
}

export default function App() {
  return (
    <div className="flex h-screen flex-col overflow-hidden bg-[#f1f0ee] font-['Noto_Sans',sans-serif] text-sm text-[#3c3c3c]">
      <TitleBar />
      <ToolBar />
      <div className="flex min-h-0 flex-1">
        <DisplaysPanel />
        <CollapseHandle side="left" />
        <Viewport />
        <CollapseHandle side="right" />
        <RightPanels />
      </div>
      <TimePanel />
      <StatusBar />
    </div>
  );
}
